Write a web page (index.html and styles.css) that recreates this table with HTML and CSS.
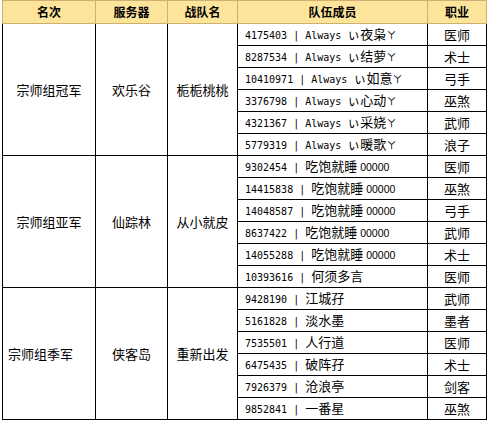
FILE: index.html
```html
<!DOCTYPE html>
<html lang="zh">
<head>
<meta charset="utf-8">
<link rel="stylesheet" href="styles.css">
</head>
<body>
<table class="roster">
  <colgroup>
    <col class="c1"><col class="c2"><col class="c3"><col class="c4"><col class="c5">
  </colgroup>
  <thead>
    <tr><th>名次</th><th>服务器</th><th>战队名</th><th>队伍成员</th><th>职业</th></tr>
  </thead>
  <tbody>
    <tr><td rowspan="6" class="grp">宗师组冠军</td><td rowspan="6" class="grp">欢乐谷</td><td rowspan="6" class="grp">栀栀桃桃</td><td class="mem"><span class="m">4175403 | Always </span>ぃ夜枭<span class="y">ㄚ</span></td><td class="job">医师</td></tr>
    <tr><td class="mem"><span class="m">8287534 | Always </span>ぃ结萝<span class="y">ㄚ</span></td><td class="job">术士</td></tr>
    <tr><td class="mem"><span class="m">10410971 | Always </span>ぃ如意<span class="y">ㄚ</span></td><td class="job">弓手</td></tr>
    <tr><td class="mem"><span class="m">3376798 | Always </span>ぃ心动<span class="y">ㄚ</span></td><td class="job">巫煞</td></tr>
    <tr><td class="mem"><span class="m">4321367 | Always </span>ぃ采娆<span class="y">ㄚ</span></td><td class="job">武师</td></tr>
    <tr><td class="mem"><span class="m">5779319 | Always </span>ぃ暖歌<span class="y">ㄚ</span></td><td class="job">浪子</td></tr>

    <tr><td rowspan="6" class="grp">宗师组亚军</td><td rowspan="6" class="grp">仙踪林</td><td rowspan="6" class="grp">从小就皮</td><td class="mem"><span class="m">9302454 | </span>吃饱就睡<span class="z"> 00000</span></td><td class="job">医师</td></tr>
    <tr><td class="mem"><span class="m">14415838 | </span>吃饱就睡<span class="z"> 00000</span></td><td class="job">巫煞</td></tr>
    <tr><td class="mem"><span class="m">14048587 | </span>吃饱就睡<span class="z"> 00000</span></td><td class="job">弓手</td></tr>
    <tr><td class="mem"><span class="m">8637422 | </span>吃饱就睡<span class="z"> 00000</span></td><td class="job">武师</td></tr>
    <tr><td class="mem"><span class="m">14055288 | </span>吃饱就睡<span class="z"> 00000</span></td><td class="job">术士</td></tr>
    <tr><td class="mem"><span class="m">10393616 | </span>何须多言</td><td class="job">医师</td></tr>

    <tr><td rowspan="6" class="grp grp-left">宗师组季军</td><td rowspan="6" class="grp">侠客岛</td><td rowspan="6" class="grp">重新出发</td><td class="mem"><span class="m">9428190 | </span>江城孖</td><td class="job">武师</td></tr>
    <tr><td class="mem"><span class="m">5161828 | </span>淡水墨</td><td class="job">墨者</td></tr>
    <tr><td class="mem"><span class="m">7535501 | </span>人行道</td><td class="job">医师</td></tr>
    <tr><td class="mem"><span class="m">6475435 | </span>破阵孖</td><td class="job">术士</td></tr>
    <tr><td class="mem"><span class="m">7926379 | </span>沧浪亭</td><td class="job">剑客</td></tr>
    <tr><td class="mem"><span class="m">9852841 | </span>一番星</td><td class="job">巫煞</td></tr>
  </tbody>
</table>
</body>
</html>
```

FILE: styles.css
```css
html, body {
  margin: 0;
  padding: 0;
  background: #ffffff;
}

.roster {
  margin-left: 2px;
  border-collapse: collapse;
  table-layout: fixed;
  width: 484px;
  font-family: "Noto Sans CJK SC", sans-serif;
  font-size: 13px;
  color: #000;
}

.c1 { width: 93px; }
.c2 { width: 72px; }
.c3 { width: 70px; }
.c4 { width: 190px; }
.c5 { width: 59px; }

.roster th {
  background: #fde49b;
  border: 1px solid #cfb070;
  height: 22px;
  padding: 0;
  font-size: 12px;
  font-weight: 700;
  text-align: center;
  line-height: 14px;
}

.roster td {
  border: 1px solid #000;
  height: 21px;
  padding: 0;
  line-height: 14px;
  white-space: nowrap;
  overflow: hidden;
}

.grp {
  text-align: center;
}

.grp-left {
  text-align: left;
  padding-left: 5px !important;
}

.mem {
  text-align: left;
  padding-left: 7px !important;
}

.job {
  text-align: center;
}

.m {
  font-family: "DejaVu Sans Mono", monospace;
  font-size: 10px;
  white-space: pre;
}

.y {
  font-size: 10px;
}

.z {
  font-family: "Liberation Sans", sans-serif;
  font-size: 10.5px;
  white-space: pre;
}
```
